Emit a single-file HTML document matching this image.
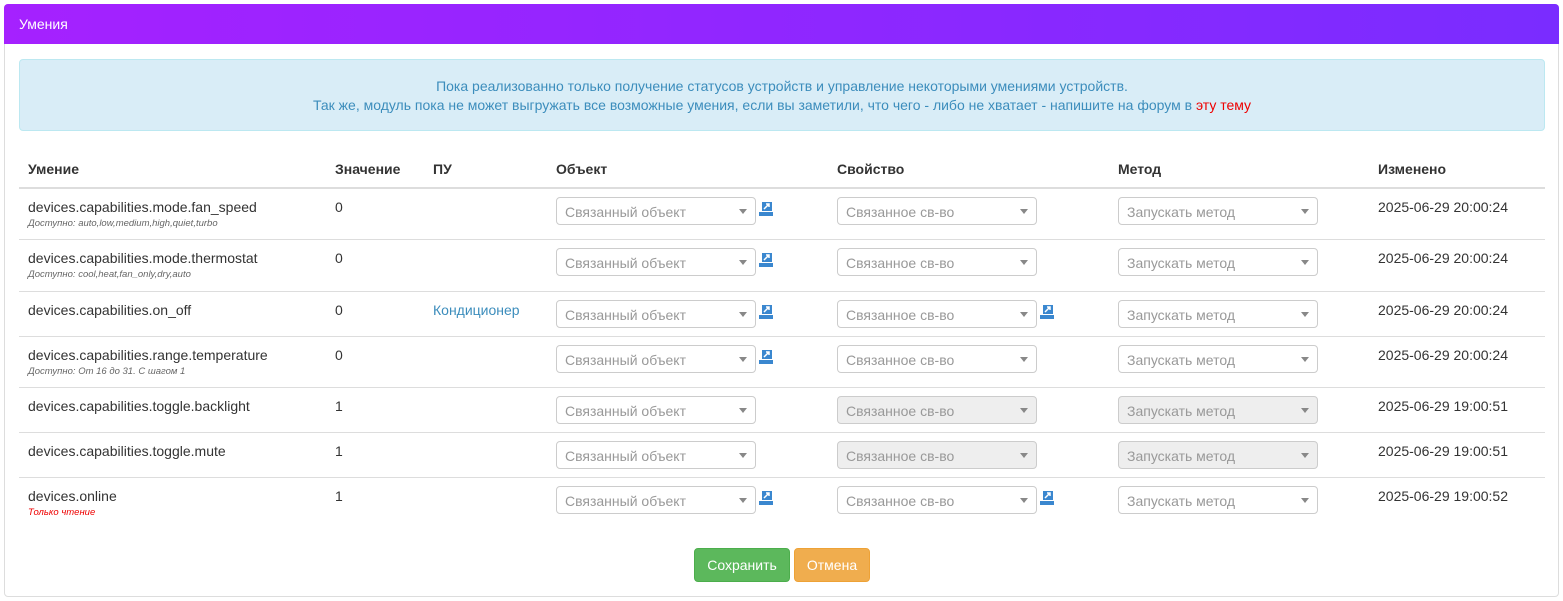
<!DOCTYPE html>
<html><head><meta charset="utf-8">
<style>
*{box-sizing:border-box;margin:0;padding:0}
body{width:1563px;height:601px;background:#fff;font-family:"Liberation Sans",Arial,sans-serif;font-size:14px;color:#333;position:relative;overflow:hidden}
.a{position:absolute;white-space:nowrap}
.panel{left:4px;top:4px;width:1555px;height:593px;border:1px solid #ddd;border-radius:4px}
.head{left:4px;top:4px;width:1555px;height:40px;background:linear-gradient(90deg,#a521ff,#7a2cff);border-radius:4px 4px 0 0;color:#fff;font-size:14px;padding:12px 15px}
.alert{left:19px;top:59px;width:1526px;height:72px;background:#d9edf7;border:1px solid #bce8f1;border-radius:4px;color:#3c8dbc;text-align:center;line-height:19px;padding-top:17px}
.th{font-weight:bold;top:161px}
.line{left:19px;width:1526px;height:1px;background:#ddd}
.sel{width:200px;height:28px;border:1px solid #ccc;border-radius:4px;color:#999;padding:6px 8px 4px;font-size:14px;background:#fff}
.sel.d{background:#eee}
.sel:after{content:"";position:absolute;right:8px;top:11px;border-left:4px solid transparent;border-right:4px solid transparent;border-top:5px solid #888}
.sub{font-size:9.5px;font-style:italic;color:#666}
.ic{width:14px;height:15px}
.btn{top:548px;height:34px;border-radius:4px;color:#fff;font-size:14px;text-align:center;line-height:32px}
</style></head><body>
<div class="a panel"></div>
<div class="a head">Умения</div>
<div class="a alert">Пока реализованно только получение статусов устройств и управление некоторыми умениями устройств.<br>Так же, модуль пока не может выгружать все возможные умения, если вы заметили, что чего - либо не хватает - напишите на форум в <span style="color:#e00">эту тему</span></div>
<div class="a th" style="left:28px">Умение</div>
<div class="a th" style="left:335px">Значение</div>
<div class="a th" style="left:433px">ПУ</div>
<div class="a th" style="left:556px">Объект</div>
<div class="a th" style="left:837px">Свойство</div>
<div class="a th" style="left:1118px">Метод</div>
<div class="a th" style="left:1378px">Изменено</div>
<div class="a line" style="top:187px;height:2px"></div>

<svg width="0" height="0" style="position:absolute"><defs><symbol id="i" viewBox="0 0 14 15"><rect x="0" y="11" width="14" height="4" fill="#3a87cf"/><rect x="3" y="1" width="10" height="9" fill="#3a87cf"/><path d="M5 8 L10 3 M7 3 H10 V6" stroke="#fff" stroke-width="1.5" fill="none"/></symbol></defs></svg>

<div id="rows"></div>
<script>
var R=[
[188,239,"devices.capabilities.mode.fan_speed","Доступно: auto,low,medium,high,quiet,turbo","0","",[1,0,0],[0,0]],
[239,291,"devices.capabilities.mode.thermostat","Доступно: cool,heat,fan_only,dry,auto","0","",[1,0,0],[0,0]],
[291,336,"devices.capabilities.on_off","","0","Кондиционер",[1,1,0],[0,0]],
[336,387,"devices.capabilities.range.temperature","Доступно: От 16 до 31. С шагом 1","0","",[1,0,0],[0,0]],
[387,432,"devices.capabilities.toggle.backlight","","1","",[0,0,0],[1,1]],
[432,477,"devices.capabilities.toggle.mute","","1","",[0,0,0],[1,1]],
[477,0,"devices.online","!Только чтение","1","",[1,1,0],[0,0]]];
var T=["2025-06-29 20:00:24","2025-06-29 20:00:24","2025-06-29 20:00:24","2025-06-29 20:00:24","2025-06-29 19:00:51","2025-06-29 19:00:51","2025-06-29 19:00:52"];
var h="";
R.forEach(function(r,k){var t=r[0];
h+='<div class="a" style="left:28px;top:'+(t+11)+'px">'+r[2]+'</div>';
if(r[3]){var red=r[3][0]=="!";h+='<div class="a sub" style="left:28px;top:'+(t+30)+'px;'+(red?'color:#e00':'')+'">'+(red?r[3].slice(1):r[3])+'</div>';}
h+='<div class="a" style="left:335px;top:'+(t+11)+'px">'+r[4]+'</div>';
if(r[5])h+='<div class="a" style="left:433px;top:'+(t+11)+'px;color:#3c8dbc">'+r[5]+'</div>';
h+='<div class="a sel" style="left:556px;top:'+(t+9)+'px">Связанный объект</div>';
h+='<div class="a sel'+(r[7][0]?' d':'')+'" style="left:837px;top:'+(t+9)+'px">Связанное св-во</div>';
h+='<div class="a sel'+(r[7][1]?' d':'')+'" style="left:1118px;top:'+(t+9)+'px">Запускать метод</div>';
if(r[6][0])h+='<svg class="a ic" style="left:759px;top:'+(t+13)+'px"><use href="#i"/></svg>';
if(r[6][1])h+='<svg class="a ic" style="left:1040px;top:'+(t+13)+'px"><use href="#i"/></svg>';
h+='<div class="a" style="left:1378px;top:'+(t+11)+'px">'+T[k]+'</div>';
if(r[1])h+='<div class="a line" style="top:'+r[1]+'px"></div>';
});
document.getElementById("rows").innerHTML=h;
</script>
<div class="a btn" style="left:694px;width:96px;background:#5cb85c;border:1px solid #4cae4c">Сохранить</div>
<div class="a btn" style="left:794px;width:76px;background:#f0ad4e;border:1px solid #eea236">Отмена</div>
</body></html>
